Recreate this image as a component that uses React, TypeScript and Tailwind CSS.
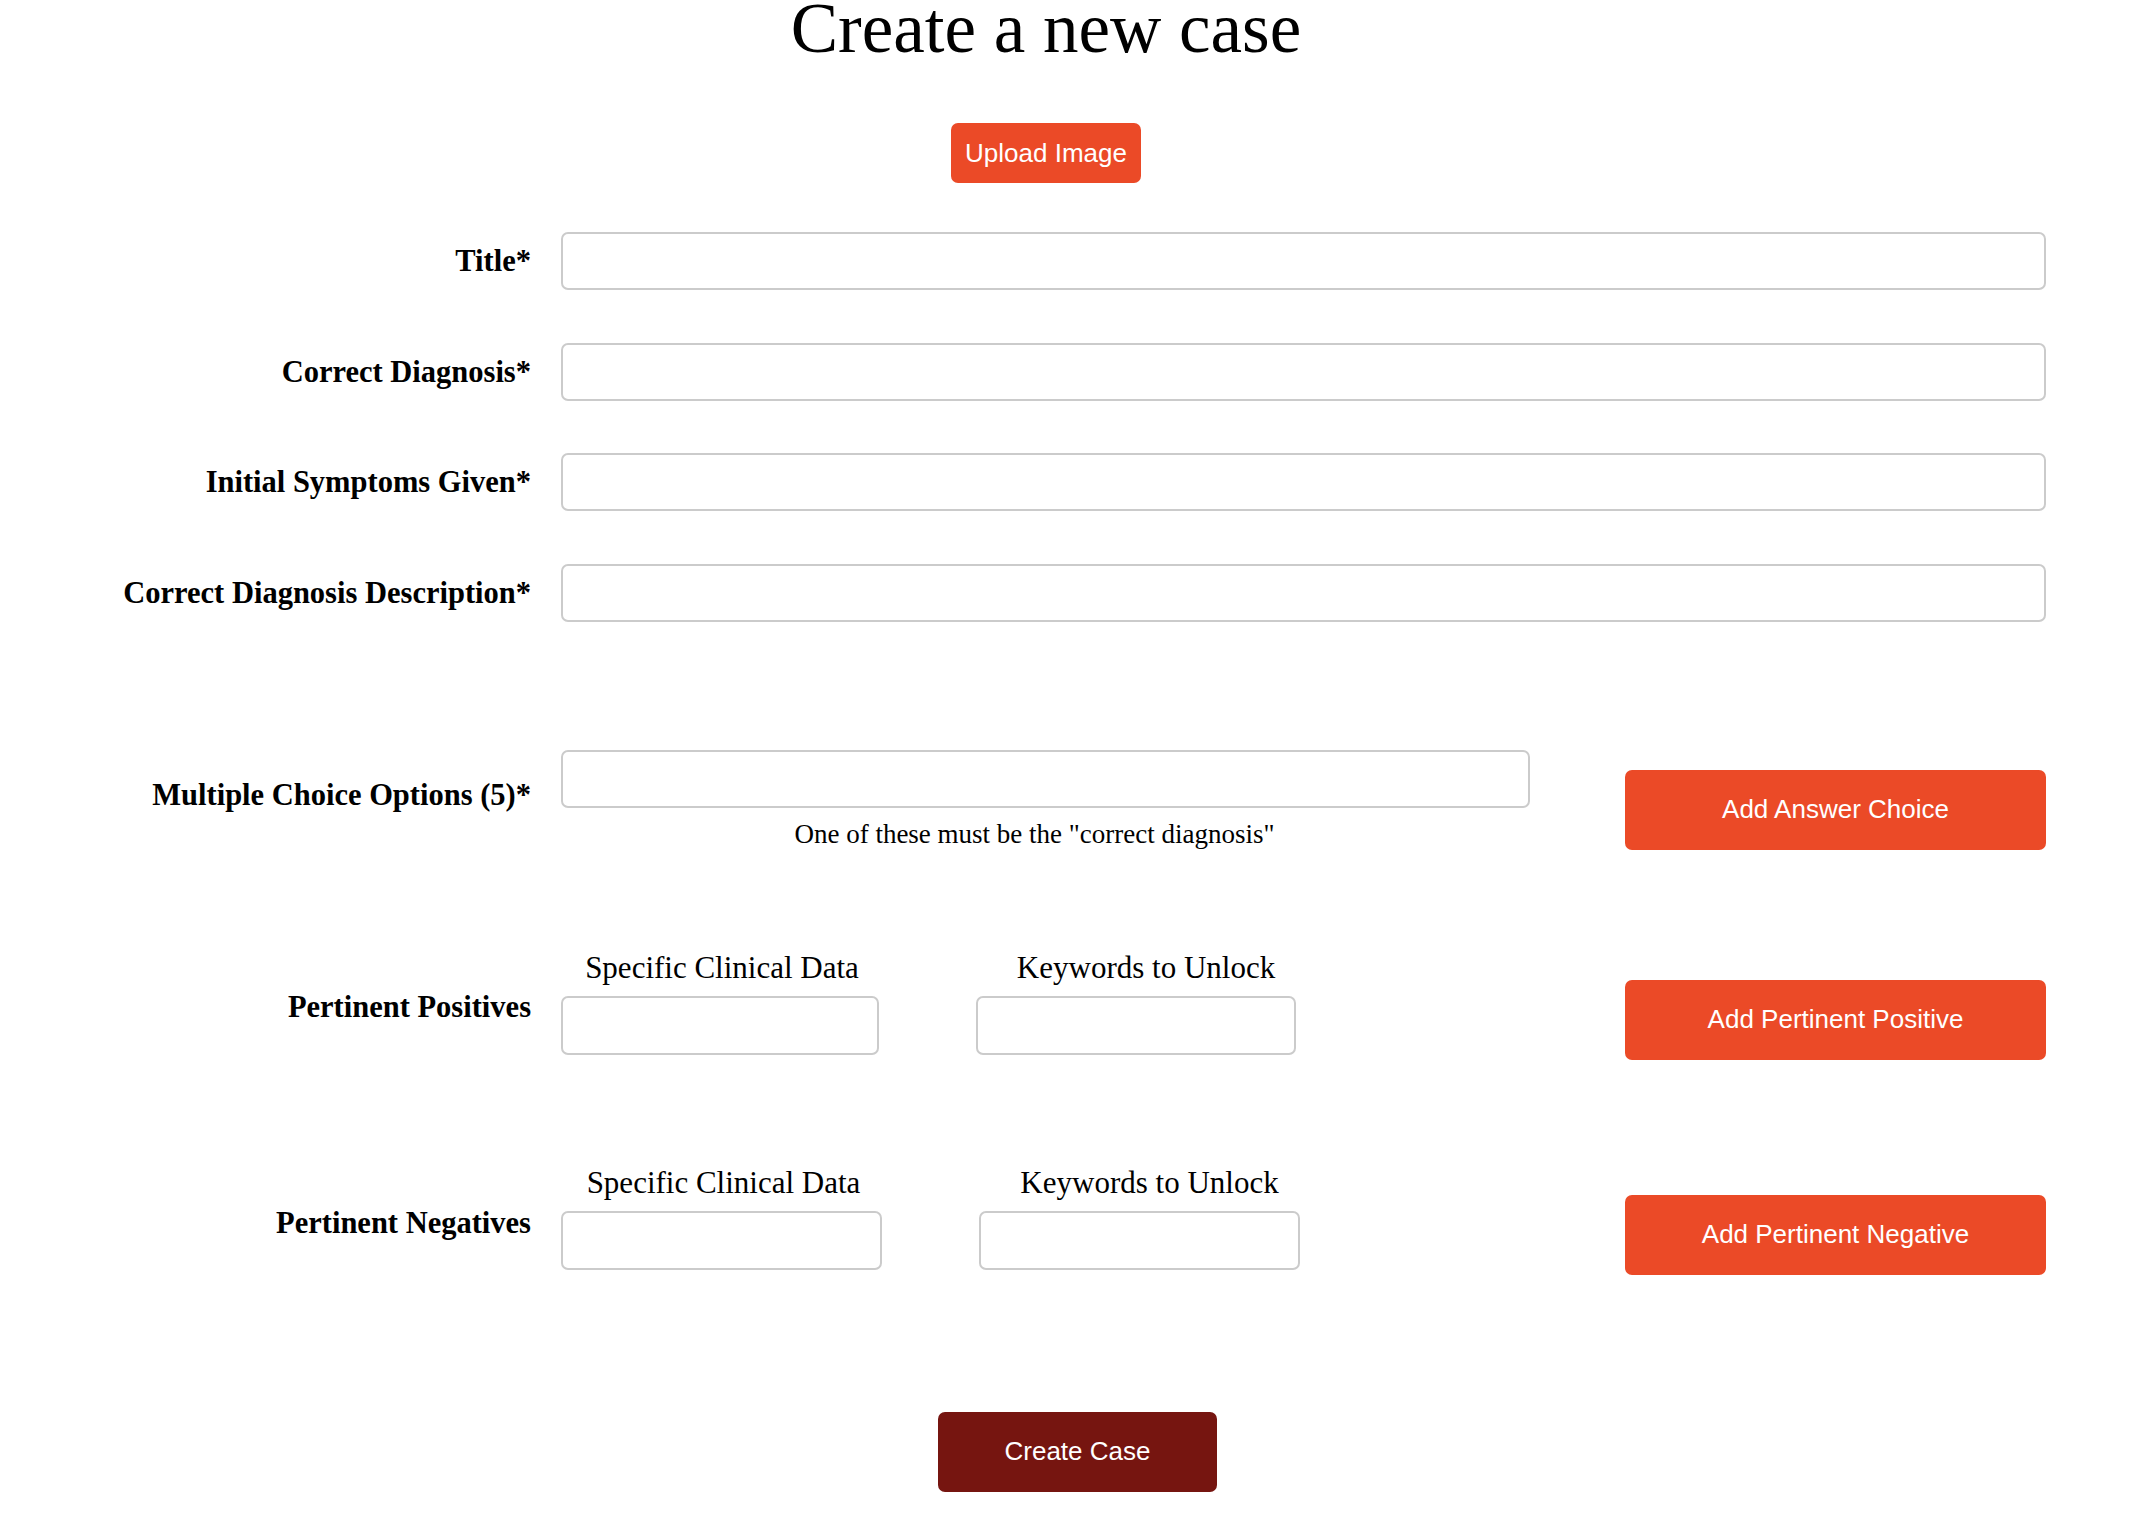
import React from "react";

const serif = "font-['Liberation_Serif','Times_New_Roman',serif]";
const sans = "font-['Liberation_Sans',Arial,sans-serif]";

const inputCls =
  "h-[58px] rounded-[7px] border-2 border-[#cbcbcb] bg-white outline-none px-3 text-[26px] " + sans;

function FieldRow({ label }: { label: string }) {
  return (
    <div className="flex items-center">
      <label className={`w-[531px] shrink-0 text-right text-[30.5px] leading-[40px] font-bold text-black ${serif}`}>
        {label}*
      </label>
      <input className={`ml-[30px] flex-1 ${inputCls}`} />
    </div>
  );
}

function PairRow({
  label,
  widths,
  button,
  labelTop,
}: {
  label: string;
  widths: [string, string];
  button: string;
  labelTop: string;
}) {
  return (
    <div className="flex items-start">
      <div
        className={`w-[531px] shrink-0 text-right text-[30.5px] leading-[40px] font-bold text-black ${serif} ${labelTop}`}
      >
        {label}
      </div>
      <div className={`ml-[30px] flex flex-col items-center ${widths[0]}`}>
        <span className={`ml-[4px] text-[31px] leading-[40px] text-black whitespace-nowrap ${serif}`}>
          Specific Clinical Data
        </span>
        <input className={`mt-[8px] w-full ${inputCls} h-[59px]`} />
      </div>
      <div className={`ml-[97px] flex flex-col items-center ${widths[1]}`}>
        <span className={`ml-[20px] text-[31px] leading-[40px] text-black whitespace-nowrap ${serif}`}>
          Keywords to Unlock
        </span>
        <input className={`mt-[8px] w-full ${inputCls} h-[59px]`} />
      </div>
      <button
        className={`ml-auto mt-[32px] h-[80px] w-[421px] rounded-[7px] bg-[#eb4a27] text-white text-[26px] ${sans}`}
      >
        {button}
      </button>
    </div>
  );
}

export default function App() {
  return (
    <div className="min-h-screen w-full bg-white pb-[28px]">
      {/* Heading + upload */}
      <div className="flex flex-col items-center pr-[56px]">
        <h1 className={`text-[71px] leading-[56px] font-normal text-black whitespace-nowrap ${serif}`}>
          Create a new case
        </h1>
        <button
          className={`mt-[67px] h-[60px] w-[190px] rounded-[7px] bg-[#eb4a27] text-white text-[26px] ${sans}`}
        >
          Upload Image
        </button>
      </div>

      <form className="pr-[102px]" onSubmit={(e) => e.preventDefault()}>
        {/* Required fields */}
        <div className="mt-[49px] flex flex-col gap-[52.5px]">
          <FieldRow label="Title" />
          <FieldRow label="Correct Diagnosis" />
          <FieldRow label="Initial Symptoms Given" />
          <FieldRow label="Correct Diagnosis Description" />
        </div>

        {/* Multiple choice */}
        <div className="mt-[128px] flex items-start">
          <label
            className={`mt-[25px] w-[531px] shrink-0 text-right text-[30.5px] leading-[40px] font-bold text-black ${serif}`}
          >
            Multiple Choice Options (5)*
          </label>
          <div className="ml-[30px] flex w-[969px] flex-col items-center">
            <input className={`w-full ${inputCls}`} />
            <p className={`mt-[8px] mr-[22px] text-[27px] leading-[36px] text-black whitespace-nowrap ${serif}`}>
              One of these must be the "correct diagnosis"
            </p>
          </div>
          <button
            className={`ml-auto mt-[20px] h-[80px] w-[421px] rounded-[7px] bg-[#eb4a27] text-white text-[26px] ${sans}`}
          >
            Add Answer Choice
          </button>
        </div>

        {/* Pertinent positives */}
        <div className="mt-[96px]">
          <PairRow
            label="Pertinent Positives"
            widths={["w-[318px]", "w-[320px]"]}
            button="Add Pertinent Positive"
            labelTop="mt-[39px]"
          />
        </div>

        {/* Pertinent negatives */}
        <div className="mt-[103px]">
          <PairRow
            label="Pertinent Negatives"
            widths={["w-[321px]", "w-[321px]"]}
            button="Add Pertinent Negative"
            labelTop="mt-[40px]"
          />
        </div>
      </form>

      <div className="mt-[137px] flex justify-center pl-[7px]">
        <button
          className={`h-[80px] w-[279px] rounded-[7px] bg-[#761510] text-white text-[26px] ${sans}`}
        >
          Create Case
        </button>
      </div>
    </div>
  );
}
